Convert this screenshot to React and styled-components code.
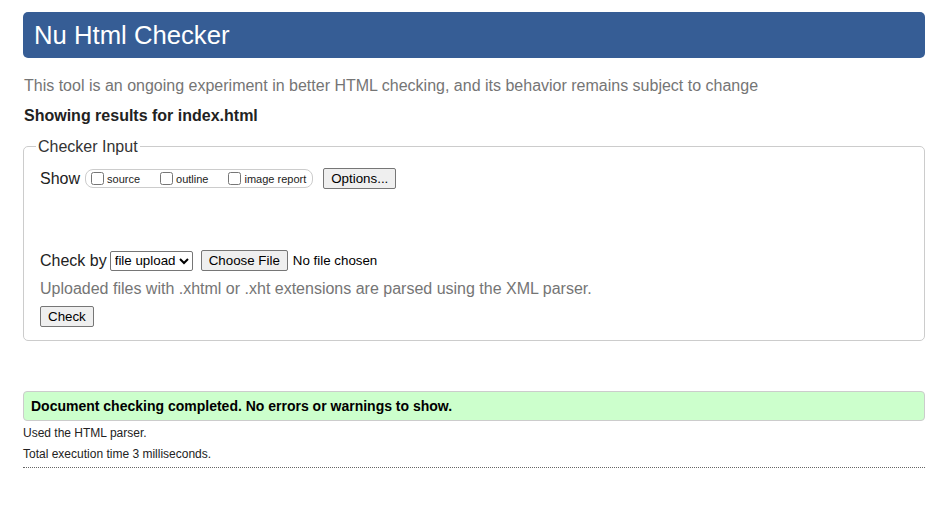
import React from "react";
import styled, { createGlobalStyle } from "styled-components";

const Global = createGlobalStyle`
  html, body { margin: 0; padding: 0; background: #fff; }
  body { font-family: "Liberation Sans", Arial, sans-serif; color: #222; }
`;

const Page = styled.div`
  width: 902px;
  padding: 12px 16px 40px 23px;
`;

const Header = styled.h1`
  margin: 0;
  height: 46px;
  display: flex;
  align-items: center;
  padding-left: 11px;
  background: #365d95;
  border-radius: 5px;
  color: #fff;
  font-size: 25.7px;
  font-weight: normal;
`;

const Intro = styled.p`
  margin: 19px 0 0 1px;
  font-size: 16px;
  line-height: 18px;
  color: #757575;
`;

const Showing = styled.p`
  margin: 12px 0 0 1px;
  font-size: 16px;
  line-height: 18px;
  font-weight: bold;
  color: #222;
`;

const Fieldset = styled.fieldset`
  margin: 12px 0 0 0;
  border: 1px solid #ccc;
  border-radius: 5px;
  padding: 0 12px 13px 16px;
`;

const Legend = styled.legend`
  padding: 1px 2px 0;
  margin-left: -4px;
  font-size: 16px;
  color: #333;
`;

const Row = styled.div`
  display: flex;
  align-items: center;
  font-size: 16px;
  margin-top: ${(p) => p.$mt || 0}px;
`;

const Pill = styled.span`
  display: inline-flex;
  align-items: center;
  height: 17px;
  border: 1px solid #ccc;
  border-radius: 8px;
  padding: 0 6px 0 2px;
  margin-left: 5px;
  gap: 17px;
`;

const CheckLabel = styled.label`
  display: inline-flex;
  align-items: center;
  font-size: 11px;
  color: #222;
`;

const Box = styled.input`
  width: 13px;
  height: 13px;
  margin: 0 3px 0 3px;
`;

const Button = styled.button`
  font-family: "Liberation Sans", Arial, sans-serif;
  font-size: 13.33px;
  height: 21px;
  padding: 1px 7px;
  background: #efefef;
  color: #000;
  border: 1px solid #767676;
  border-radius: 2px;
  margin-left: ${(p) => p.$ml || 0}px;
`;

const Select = styled.select`
  font-family: "Liberation Sans", Arial, sans-serif;
  font-size: 13.33px;
  height: 20px;
  margin-left: 3px;
  padding: 0;
  border: 1px solid #767676;
  border-radius: 2px;
  background: #fff;
  color: #000;
`;

const NoFile = styled.span`
  font-size: 13.33px;
  color: #000;
  margin-left: 5px;
`;

const Hint = styled.p`
  margin: 9px 0 0 0;
  font-size: 16px;
  line-height: 18px;
  color: #757575;
`;

const Success = styled.div`
  margin-top: 50px;
  height: 28px;
  display: flex;
  align-items: center;
  padding-left: 7px;
  background: #ccffcc;
  border: 1px solid #ccc;
  border-radius: 4px;
  font-size: 14px;
  font-weight: bold;
  color: #000;
`;

const Detail = styled.p`
  margin: ${(p) => p.$mt || 0}px 0 0 0;
  font-size: 12px;
  line-height: 14px;
  color: #222;
`;

const Rule = styled.hr`
  margin: 6px 0 0 0;
  border: 0;
  border-top: 1px dotted #666;
`;

export default function App() {
  return (
    <>
      <Global />
      <Page>
        <Header>Nu Html Checker</Header>
        <Intro>
          This tool is an ongoing experiment in better HTML checking, and its behavior remains subject to change
        </Intro>
        <Showing>Showing results for index.html</Showing>
        <Fieldset>
          <Legend>Checker Input</Legend>
          <Row $mt={12}>
            Show
            <Pill>
              <CheckLabel><Box type="checkbox" />source</CheckLabel>
              <CheckLabel><Box type="checkbox" />outline</CheckLabel>
              <CheckLabel><Box type="checkbox" />image report</CheckLabel>
            </Pill>
            <Button $ml={10}>Options...</Button>
          </Row>
          <Row $mt={61}>
            Check by
            <Select defaultValue="file">
              <option value="file">file upload</option>
              <option value="addr">address</option>
              <option value="text">text input</option>
            </Select>
            <Button $ml={8}>Choose File</Button>
            <NoFile>No file chosen</NoFile>
          </Row>
          <Hint>Uploaded files with .xhtml or .xht extensions are parsed using the XML parser.</Hint>
          <Row $mt={8}>
            <Button>Check</Button>
          </Row>
        </Fieldset>
        <Success>Document checking completed. No errors or warnings to show.</Success>
        <Detail $mt={5}>Used the HTML parser.</Detail>
        <Detail $mt={7}>Total execution time 3 milliseconds.</Detail>
        <Rule />
      </Page>
    </>
  );
}
